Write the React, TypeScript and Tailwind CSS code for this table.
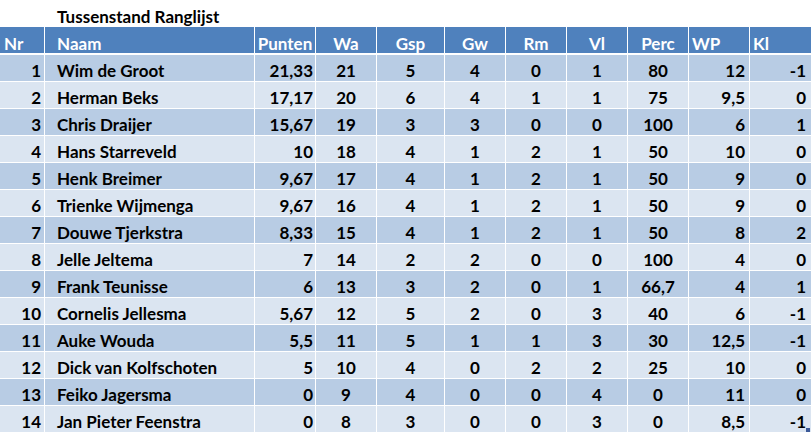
const rows: (string | number)[][] = [
  [1, "Wim de Groot", "21,33", 21, 5, 4, 0, 1, "80", "12", "-1"],
  [2, "Herman Beks", "17,17", 20, 6, 4, 1, 1, "75", "9,5", "0"],
  [3, "Chris Draijer", "15,67", 19, 3, 3, 0, 0, "100", "6", "1"],
  [4, "Hans Starreveld", "10", 18, 4, 1, 2, 1, "50", "10", "0"],
  [5, "Henk Breimer", "9,67", 17, 4, 1, 2, 1, "50", "9", "0"],
  [6, "Trienke Wijmenga", "9,67", 16, 4, 1, 2, 1, "50", "9", "0"],
  [7, "Douwe Tjerkstra", "8,33", 15, 4, 1, 2, 1, "50", "8", "2"],
  [8, "Jelle Jeltema", "7", 14, 2, 2, 0, 0, "100", "4", "0"],
  [9, "Frank Teunisse", "6", 13, 3, 2, 0, 1, "66,7", "4", "1"],
  [10, "Cornelis Jellesma", "5,67", 12, 5, 2, 0, 3, "40", "6", "-1"],
  [11, "Auke Wouda", "5,5", 11, 5, 1, 1, 3, "30", "12,5", "-1"],
  [12, "Dick van Kolfschoten", "5", 10, 4, 0, 2, 2, "25", "10", "0"],
  [13, "Feiko Jagersma", "0", 9, 4, 0, 0, 4, "0", "11", "0"],
  [14, "Jan Pieter Feenstra", "0", 8, 3, 0, 0, 3, "0", "8,5", "-1"],
];

// header alignment / data alignment per column
const headers = ["Nr", "Naam", "Punten", "Wa", "Gsp", "Gw", "Rm", "Vl", "Perc", "WP", "Kl"];
const headCls = [
  "justify-start pl-[4px]",
  "justify-start pl-[12px]",
  "justify-center",
  "justify-center",
  "justify-center",
  "justify-center",
  "justify-center",
  "justify-center",
  "justify-center",
  "justify-start pl-[3px]",
  "justify-start pl-[3px]",
];
const cellCls = [
  "justify-end pr-[3px]",
  "justify-start pl-[12px]",
  "justify-end pr-[2px]",
  "justify-center",
  "justify-center",
  "justify-center",
  "justify-center",
  "justify-center",
  "justify-center",
  "justify-end pr-[4px]",
  "justify-end pr-[5px]",
];

const gridCols = "grid grid-cols-[44px_209px_60px_60px_67px_60px_60px_60px_60px_60px_61px] gap-x-px";

export default function App() {
  return (
    <div className="w-[811px] h-[433px] bg-white overflow-hidden relative font-['Lato',sans-serif] font-bold text-[17px] text-black">
      {/* title */}
      <div className="h-[27px] pl-[57px] flex items-end pb-[2px] leading-none">Tussenstand Ranglijst</div>

      {/* header */}
      <div className={`${gridCols} h-[26px]`}>
        {headers.map((h, i) => (
          <div key={h} className={`bg-[#4F81BD] text-white flex items-end pb-[1px] leading-none ${headCls[i]}`}>
            {h}
          </div>
        ))}
      </div>

      <div className="flex flex-col gap-px mt-[2px]">
        {rows.map((r, ri) => (
          <div key={ri} className={`${gridCols} h-[26px]`}>
            {r.map((v, ci) => (
              <div
                key={ci}
                className={`flex items-end pb-[2px] leading-none ${ri % 2 === 0 ? "bg-[#B8CCE4]" : "bg-[#DBE5F1]"} ${cellCls[ci]}`}
              >
                {v}
              </div>
            ))}
          </div>
        ))}
      </div>

      {/* fill handle */}
      <div className="absolute right-[1px] bottom-[1px] w-[4px] h-[4px] bg-[#3B5998]" />
    </div>
  );
}
